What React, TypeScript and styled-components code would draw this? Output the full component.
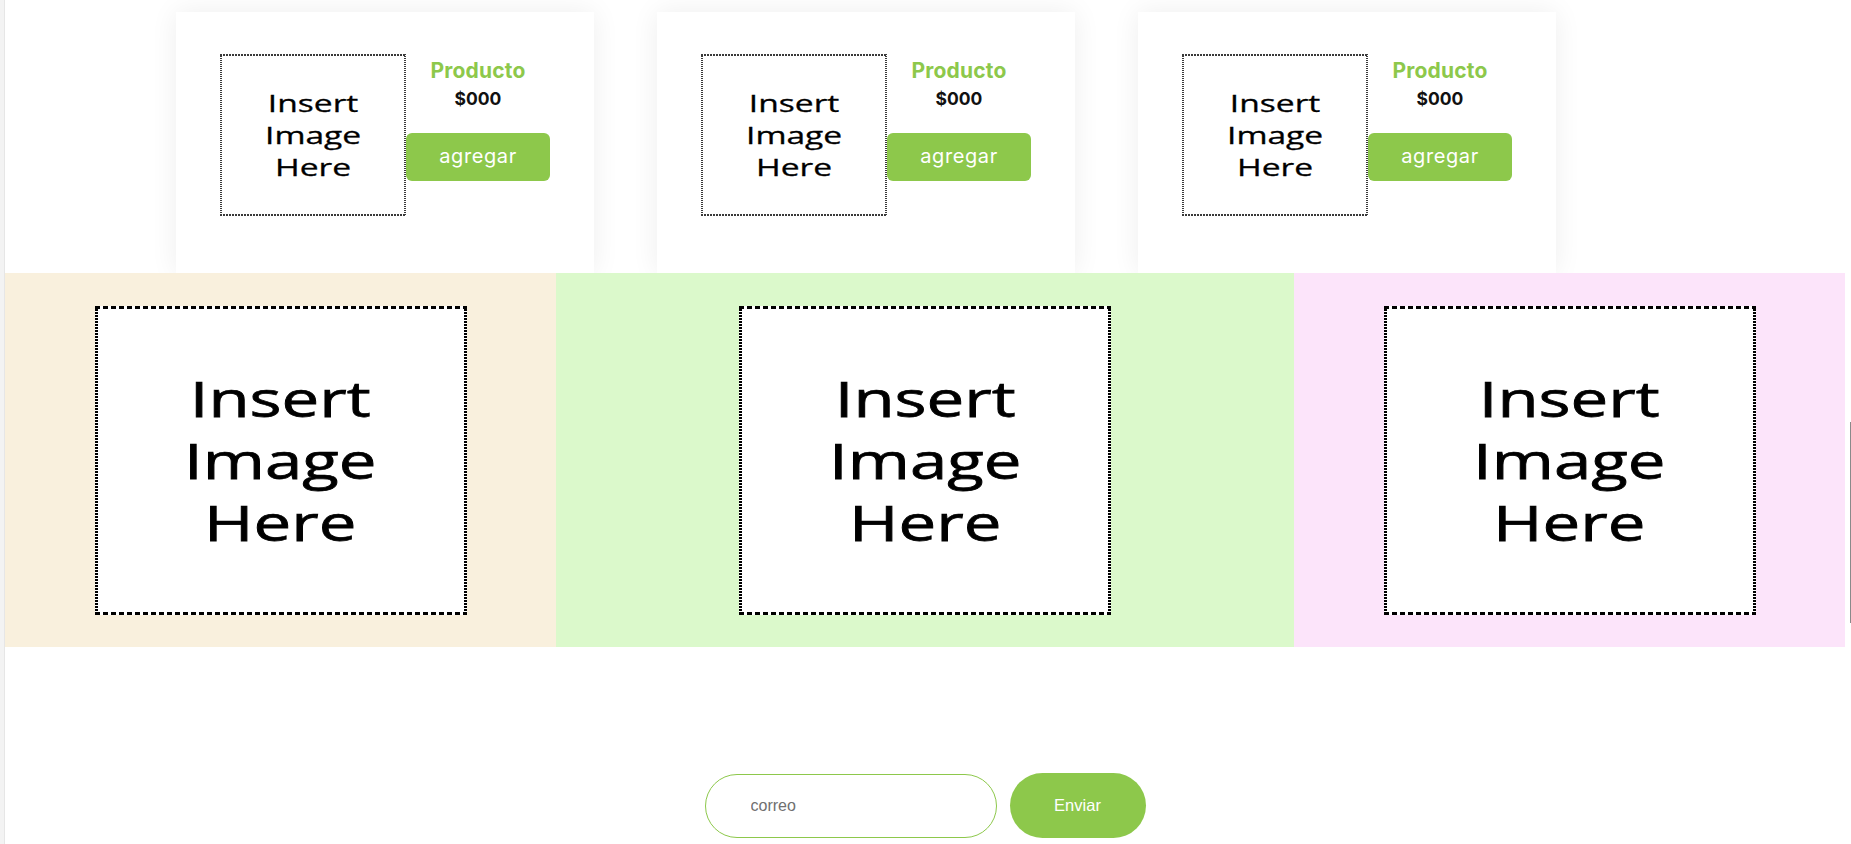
import React from "react";
import styled, { createGlobalStyle } from "styled-components";

const GREEN = "#8dc84b";

const GlobalStyle = createGlobalStyle`
  html, body {
    margin: 0;
    padding: 0;
    background: #f3f3f3;
  }
  body {
    font-family: "Inter", "Liberation Sans", sans-serif;
    overflow: hidden;
  }
  * { box-sizing: border-box; }
`;

const Page = styled.div`
  margin-left: 4px;
  border-left: 1px solid #e6e6e6;
  background: #ffffff;
  min-height: 844px;
  width: 1847px;
`;

const CardRow = styled.section`
  display: flex;
  gap: 63px;
  padding: 12px 0 0 171px;
`;

const Card = styled.article`
  width: 418px;
  height: 261px;
  background: #ffffff;
  box-shadow: 0 0 26px rgba(0, 0, 0, 0.07);
  padding: 42px 44px 0 44px;
  display: flex;
  align-items: flex-start;
`;

const Info = styled.div`
  width: 144px;
  display: flex;
  flex-direction: column;
  align-items: center;
  padding-top: 4px;
`;

const ProductName = styled.h3`
  margin: 0;
  font-family: "Inter", "Lato", sans-serif;
  font-weight: 700;
  font-size: 21px;
  line-height: 26px;
  letter-spacing: 0.2px;
  color: ${GREEN};
`;

const Price = styled.div`
  margin-top: 4px;
  font-family: "Inter", "Lato", sans-serif;
  font-weight: 700;
  font-size: 17.5px;
  line-height: 22px;
  color: #111111;
`;

const AddButton = styled.button`
  margin-top: 23px;
  width: 144px;
  height: 48px;
  border: none;
  border-radius: 6px;
  background: ${GREEN};
  color: #ffffff;
  font-family: "Inter", "Lato", sans-serif;
  font-weight: 400;
  font-size: 20px;
  letter-spacing: 0.6px;
  display: flex;
  align-items: center;
  justify-content: center;
  padding: 0 0 2px 0;
  cursor: pointer;
`;

type BoxProps = {
  $w: number;
  $h: number;
  $t: number;
  $dash: number;
  $gap: number;
  $vdash: number;
  $vgap: number;
  $ink: string;
};

const PlaceholderBox = styled.div<BoxProps>`
  flex: none;
  width: ${(p) => p.$w}px;
  height: ${(p) => p.$h}px;
  display: flex;
  align-items: center;
  justify-content: center;
  background:
    repeating-linear-gradient(90deg, ${(p) => p.$ink} 0 ${(p) => p.$dash}px, transparent ${(p) => p.$dash}px ${(p) => p.$dash + p.$gap}px) left top / 100% ${(p) => p.$t}px no-repeat,
    repeating-linear-gradient(90deg, ${(p) => p.$ink} 0 ${(p) => p.$dash}px, transparent ${(p) => p.$dash}px ${(p) => p.$dash + p.$gap}px) left bottom / 100% ${(p) => p.$t}px no-repeat,
    repeating-linear-gradient(180deg, ${(p) => p.$ink} 0 ${(p) => p.$vdash}px, transparent ${(p) => p.$vdash}px ${(p) => p.$vdash + p.$vgap}px) left top / ${(p) => p.$t}px 100% no-repeat,
    repeating-linear-gradient(180deg, ${(p) => p.$ink} 0 ${(p) => p.$vdash}px, transparent ${(p) => p.$vdash}px ${(p) => p.$vdash + p.$vgap}px) right top / ${(p) => p.$t}px 100% no-repeat,
    #ffffff;
`;

const PlaceholderText = styled.span<{ $size: number; $line: number; $stroke: number }>`
  display: block;
  font-family: "Open Sans", "Noto Sans", sans-serif;
  font-weight: 400;
  font-size: ${(p) => p.$size}px;
  line-height: ${(p) => p.$line}px;
  color: #000000;
  -webkit-text-stroke: ${(p) => p.$stroke}px #000;
  text-align: center;
  transform: scaleX(1.37);
  white-space: nowrap;
`;

const Band = styled.section`
  width: 1840px;
  height: 374px;
  display: grid;
  grid-template-columns: 551px 738px 551px;
`;

const BandPanel = styled.div<{ $bg: string }>`
  background: ${(p) => p.$bg};
  display: flex;
  align-items: center;
  justify-content: center;
`;

const Subscribe = styled.form`
  margin-top: 126px;
  display: flex;
  justify-content: center;
  align-items: center;
  gap: 13px;
  padding-right: 6px;
`;

const EmailInput = styled.input`
  width: 292px;
  height: 64px;
  border: 1px solid ${GREEN};
  border-radius: 32px;
  padding: 0 20px 0 45px;
  font-family: "Liberation Sans", Arial, sans-serif;
  font-size: 16px;
  color: #333;
  background: #fff;
  outline: none;
  &::placeholder {
    color: #707070;
  }
`;

const SendButton = styled.button`
  width: 136px;
  height: 65px;
  border: none;
  border-radius: 33px;
  background: ${GREEN};
  color: #ffffff;
  font-family: "Liberation Sans", Arial, sans-serif;
  font-size: 16.5px;
  cursor: pointer;
`;

const ScrollThumb = styled.div`
  position: fixed;
  right: 0;
  top: 422px;
  width: 1px;
  height: 201px;
  background: #8a8a8a;
`;

const Placeholder: React.FC<{ big?: boolean }> = ({ big }) =>
  big ? (
    <PlaceholderBox $w={372} $h={309} $t={3} $dash={5} $gap={3} $vdash={2} $vgap={1} $ink="#000">
      <PlaceholderText $size={49} $line={62} $stroke={0.75}>
        Insert
        <br />
        Image
        <br />
        Here
      </PlaceholderText>
    </PlaceholderBox>
  ) : (
    <PlaceholderBox $w={186} $h={162} $t={2} $dash={2} $gap={1} $vdash={1} $vgap={1} $ink="#3a3a3a">
      <PlaceholderText $size={24.5} $line={32} $stroke={0.3}>
        Insert
        <br />
        Image
        <br />
        Here
      </PlaceholderText>
    </PlaceholderBox>
  );

const products = [1, 2, 3];
const panels = ["#f9f0dd", "#dbf9cb", "#fce4fa"];

export default function App() {
  return (
    <>
      <GlobalStyle />
      <Page>
        <CardRow>
          {products.map((id) => (
            <Card key={id}>
              <Placeholder />
              <Info>
                <ProductName>Producto</ProductName>
                <Price>$000</Price>
                <AddButton type="button">agregar</AddButton>
              </Info>
            </Card>
          ))}
        </CardRow>
        <Band>
          {panels.map((bg) => (
            <BandPanel key={bg} $bg={bg}>
              <Placeholder big />
            </BandPanel>
          ))}
        </Band>
        <Subscribe onSubmit={(e) => e.preventDefault()}>
          <EmailInput type="email" placeholder="correo" />
          <SendButton type="submit">Enviar</SendButton>
        </Subscribe>
      </Page>
      <ScrollThumb />
    </>
  );
}
